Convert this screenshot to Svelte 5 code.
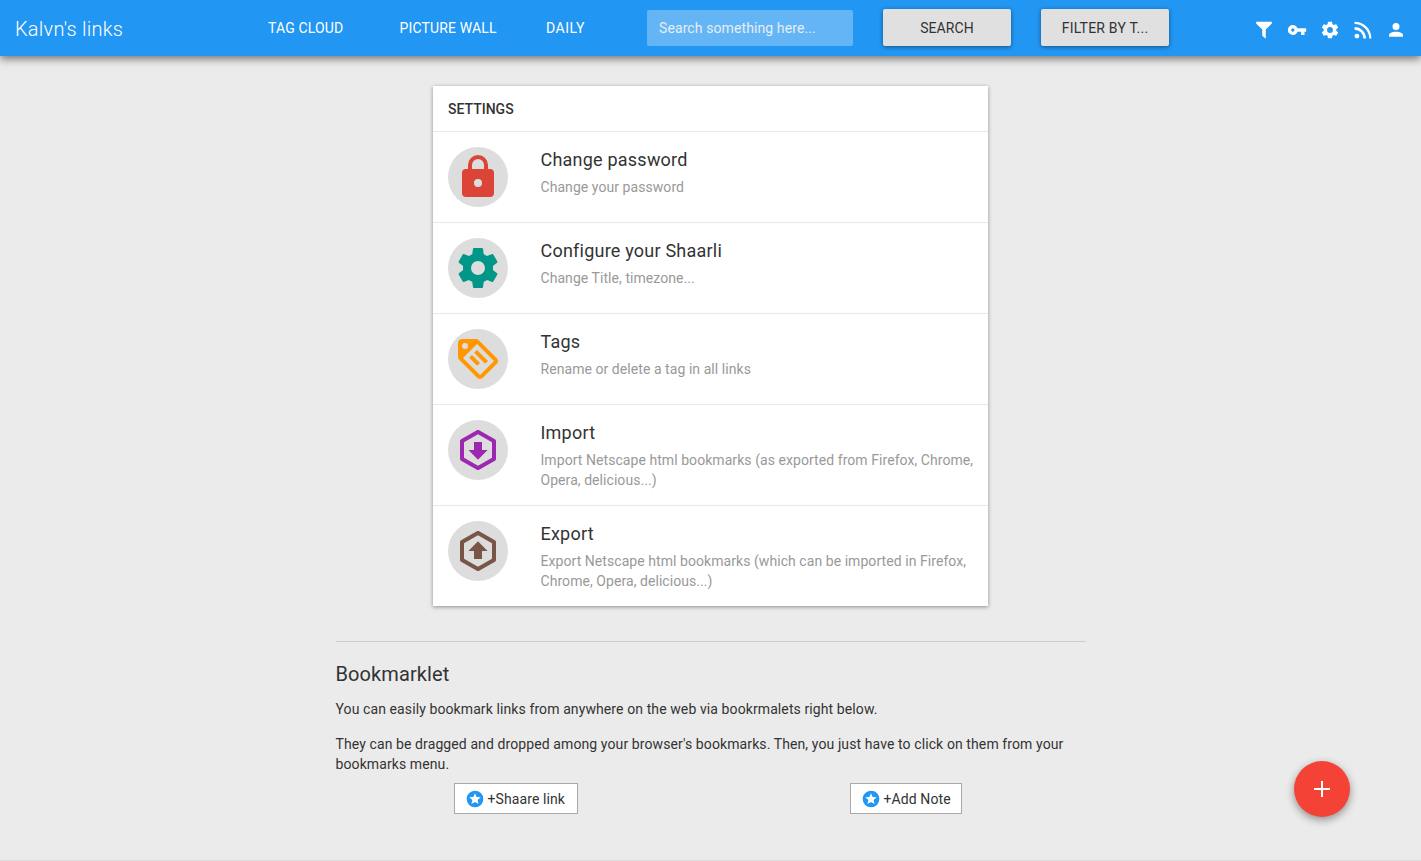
<script>
  const gear =
    'M12,15.5A3.5,3.5 0 0,1 8.5,12A3.5,3.5 0 0,1 12,8.5A3.5,3.5 0 0,1 15.5,12A3.5,3.5 0 0,1 12,15.5M19.43,12.97C19.47,12.65 19.5,12.33 19.5,12C19.5,11.67 19.47,11.34 19.43,11L21.54,9.37C21.73,9.22 21.78,8.95 21.66,8.73L19.66,5.27C19.54,5.05 19.27,4.96 19.05,5.05L16.56,6.05C16.04,5.66 15.5,5.32 14.87,5.07L14.5,2.42C14.46,2.18 14.25,2 14,2H10C9.75,2 9.54,2.18 9.5,2.42L9.13,5.07C8.5,5.32 7.96,5.66 7.44,6.05L4.95,5.05C4.73,4.96 4.46,5.05 4.34,5.27L2.34,8.73C2.21,8.95 2.27,9.22 2.46,9.37L4.57,11C4.53,11.34 4.5,11.67 4.5,12C4.5,12.33 4.53,12.65 4.57,12.97L2.46,14.63C2.27,14.78 2.21,15.05 2.34,15.27L4.34,18.73C4.46,18.95 4.73,19.03 4.95,18.95L7.44,17.94C7.96,18.34 8.5,18.68 9.13,18.93L9.5,21.58C9.54,21.82 9.75,22 10,22H14C14.25,22 14.46,21.82 14.5,21.58L14.87,18.93C15.5,18.67 16.04,18.34 16.56,17.94L19.05,18.95C19.27,19.03 19.54,18.95 19.66,18.73L21.66,15.27C21.78,15.05 21.73,14.78 21.54,14.63L19.43,12.97Z';
  const hexagon =
    'M21,16.5C21,16.88 20.79,17.21 20.47,17.38L12.57,21.82C12.41,21.94 12.21,22 12,22C11.79,22 11.59,21.94 11.43,21.82L3.53,17.38C3.21,17.21 3,16.88 3,16.5V7.5C3,7.12 3.21,6.79 3.53,6.62L11.43,2.18C11.59,2.06 11.79,2 12,2C12.21,2 12.41,2.06 12.57,2.18L20.47,6.62C20.79,6.79 21,7.12 21,7.5V16.5M12,4.15L5,8.09V15.91L12,19.85L19,15.91V8.09L12,4.15Z';

  const settings = [
    {
      title: 'Change password',
      text: 'Change your password',
      color: '#db4437',
      path: 'M12,17A2,2 0 0,0 14,15A2,2 0 0,0 12,13A2,2 0 0,0 10,15A2,2 0 0,0 12,17M18,8A2,2 0 0,1 20,10V20A2,2 0 0,1 18,22H6A2,2 0 0,1 4,20V10A2,2 0 0,1 6,8H7V6A5,5 0 0,1 17,6V8H18M12,3A3,3 0 0,0 9,6V8H15V6A3,3 0 0,0 12,3Z'
    },
    { title: 'Configure your Shaarli', text: 'Change Title, timezone...', color: '#009688', path: gear },
    {
      title: 'Tags',
      text: 'Rename or delete a tag in all links',
      color: '#ff9800',
      path: 'M5.5,7A1.5,1.5 0 0,0 7,5.5A1.5,1.5 0 0,0 5.5,4A1.5,1.5 0 0,0 4,5.5A1.5,1.5 0 0,0 5.5,7M21.41,11.58C21.77,11.94 22,12.44 22,13C22,13.55 21.78,14.05 21.41,14.41L14.41,21.41C14.05,21.77 13.55,22 13,22C12.45,22 11.95,21.77 11.58,21.41L2.59,12.41C2.22,12.05 2,11.55 2,11V4C2,2.89 2.89,2 4,2H11C11.55,2 12.05,2.22 12.41,2.58L21.41,11.58M13,20L20,13L11.5,4.5L4.5,11.5L13,20M10.09,8.91L11.5,7.5L17,13L15.59,14.41L10.09,8.91M7.59,11.41L9,10L13,14L11.59,15.41L7.59,11.41Z'
    },
    {
      title: 'Import',
      text: 'Import Netscape html bookmarks (as exported from Firefox, Chrome, Opera, delicious...)',
      color: '#9c27b0',
      path: hexagon + 'M10,8H14V12H16.8L12,16.9L7.2,12H10Z'
    },
    {
      title: 'Export',
      text: 'Export Netscape html bookmarks (which can be imported in Firefox, Chrome, Opera, delicious...)',
      color: '#795548',
      path: hexagon + 'M10,16H14V12H16.8L12,7.1L7.2,12H10Z'
    }
  ];

  const tools = [
    { label: 'Filter', path: 'M2.6,2.2H21.4V4.2L14.1,11.4V22.6L9.9,18.8V11.4L2.6,4.2Z' },
    { label: 'Login', path: 'M7,14A2,2 0 0,1 5,12A2,2 0 0,1 7,10A2,2 0 0,1 9,12A2,2 0 0,1 7,14M12.65,10C11.83,7.67 9.61,6 7,6A6,6 0 0,0 1,12A6,6 0 0,0 7,18C9.61,18 11.83,16.33 12.65,14H17V18H21V14H23V10H12.65Z' },
    { label: 'Settings', path: gear },
    { label: 'RSS', path: 'M4.7,16.4A2.9,2.9 0 0,1 4.7,22.2A2.9,2.9 0 0,1 4.7,16.4M1.9,2A20.2,20.2 0 0,1 22.1,22.2H19.4A17.5,17.5 0 0,0 1.9,4.7V2M1.9,8.5A13.7,13.7 0 0,1 15.6,22.2H12.5A10.6,10.6 0 0,0 1.9,11.6V8.5Z' },
    { label: 'Account', path: 'M12,3.6A4.2,4.2 0 0,1 16.2,7.8A4.2,4.2 0 0,1 12,12A4.2,4.2 0 0,1 7.8,7.8A4.2,4.2 0 0,1 12,3.6M12,14C16.6,14 20.4,15.8 20.4,18.1V20.2H3.6V18.1C3.6,15.8 7.4,14 12,14Z' }
  ];

  const bookmarklets = [
    { name: '+Shaare link', width: 124 },
    { name: '+Add Note', width: 112 }
  ];
</script>

<div class="page">
  <header>
    <span class="brand">Kalvn's links</span>
    <nav>
      <span class="cloud">TAG CLOUD</span>
      <span class="wall">PICTURE WALL</span>
      <span class="daily">DAILY</span>
    </nav>
    <input type="text" placeholder="Search something here..." />
    <button class="raised">SEARCH</button>
    <button class="raised filter">FILTER BY T...</button>
    <div class="tools">
      {#each tools as t}
        <svg viewBox="0 0 24 24" role="img" aria-label={t.label}><path d={t.path} /></svg>
      {/each}
    </div>
  </header>

  <main>
    <section class="card">
      <h2>SETTINGS</h2>
      {#each settings as s}
        <div class="row">
          <div class="disc">
            <svg viewBox="0 0 24 24"><path d={s.path} fill={s.color} fill-rule="evenodd" /></svg>
          </div>
          <div class="info">
            <h3>{s.title}</h3>
            <p>{s.text}</p>
          </div>
        </div>
      {/each}
    </section>

    <section class="bookmarklet">
      <h2>Bookmarklet</h2>
      <p>You can easily bookmark links from anywhere on the web via bookrmalets right below.</p>
      <p>They can be dragged and dropped among your browser's bookmarks. Then, you just have to click on them from your bookmarks menu.</p>
      <div class="links">
        {#each bookmarklets as b}
          <div class="cell">
            <span class="drag" style:width="{b.width}px">
              <svg viewBox="0 0 24 24"><path d="M16.23,18L12,15.45L7.77,18L8.89,13.19L5.16,9.96L10.08,9.54L12,5L13.92,9.53L18.84,9.95L15.11,13.18L16.23,18M12,2C6.47,2 2,6.5 2,12A10,10 0 0,0 12,22A10,10 0 0,0 22,12A10,10 0 0,0 12,2Z" fill="#2196f3" fill-rule="evenodd" /></svg>
              {b.name}
            </span>
          </div>
        {/each}
      </div>
    </section>
  </main>

  <button class="fab" aria-label="Add">
    <svg viewBox="0 0 16 16"><path d="M7,0H9V7H16V9H9V16H7V9H0V7H7Z" fill="#fff" /></svg>
  </button>
</div>

<style>
  :global(body) {
    background: #ebebeb;
  }
  .page {
    box-sizing: border-box;
    height: 861px;
    border-bottom: 1px solid #dcdcdc;
    font: 14px/20px Roboto, sans-serif;
    letter-spacing: 0.1px;
    color: #333;
  }
  h2, h3, p {
    margin: 0;
    font-weight: 400;
  }
  svg {
    display: block;
    flex: none;
  }
  header {
    display: flex;
    align-items: center;
    box-sizing: border-box;
    height: 56px;
    padding: 0 15px;
    background: #2196f3;
    color: #fff;
    box-shadow: 0 3px 8px rgba(0, 0, 0, 0.5);
  }
  .brand {
    width: 253px;
    font-size: 20px;
    font-weight: 300;
    letter-spacing: 0.24px;
    padding-top: 2px;
  }
  nav {
    display: flex;
    letter-spacing: 0.15px;
    white-space: nowrap;
  }
  .cloud { width: 131.5px; }
  .wall { width: 146.5px; }
  .daily {
    width: 101px;
    letter-spacing: 0.5px;
  }
  input {
    box-sizing: border-box;
    width: 206px;
    height: 36px;
    margin-right: 30px;
    padding: 0 12px;
    border: 0;
    border-radius: 2px;
    background: rgba(255, 255, 255, 0.3);
    font: inherit;
    letter-spacing: 0.1px;
  }
  input::placeholder {
    color: #e6eef5;
    opacity: 1;
  }
  .raised {
    width: 128px;
    height: 37px;
    margin: 0 30px 1px 0;
    padding: 0;
    border: 0;
    border-radius: 2px;
    background: #e0e0e0;
    color: #333;
    font: inherit;
    letter-spacing: 0.1px;
    box-shadow: 0 1px 4px rgba(0, 0, 0, 0.45);
  }
  .filter {
    letter-spacing: 0.22px;
  }
  .tools {
    display: flex;
    gap: 13px;
    margin-left: auto;
    padding-top: 4px;
  }
  .tools svg {
    width: 20px;
    height: 20px;
    fill: #fff;
  }
  main {
    padding-top: 30px;
  }
  .card {
    width: 555px;
    margin: 0 auto;
    background: #fff;
    box-shadow: 0 1px 4px rgba(0, 0, 0, 0.4);
  }
  .card h2 {
    padding: 13px 15px 12px;
    font-size: 14px;
    font-weight: 500;
    line-height: 20px;
    letter-spacing: 0;
  }
  .row {
    display: flex;
    gap: 32.5px;
    padding: 15px 10px 15px 15px;
    border-top: 1px solid #e8e8e8;
  }
  .disc {
    display: flex;
    align-items: center;
    justify-content: center;
    flex: none;
    width: 60px;
    height: 60px;
    border-radius: 50%;
    background: #ddd;
  }
  .disc svg {
    width: 48px;
    height: 48px;
  }
  h3 {
    margin-bottom: 4px;
    font-size: 18px;
    line-height: 26px;
    letter-spacing: 0.22px;
  }
  .info p {
    color: #999;
    letter-spacing: 0.06px;
  }
  .bookmarklet {
    box-sizing: border-box;
    width: 750px;
    margin: 35px auto 0;
    padding-top: 20px;
    border-top: 1px solid #ccc;
  }
  .bookmarklet h2 {
    margin-bottom: 13px;
    font-size: 20px;
    line-height: 24px;
  }
  .bookmarklet p + p {
    margin-top: 15px;
  }
  .links {
    display: grid;
    grid-template-columns: 1fr 1fr;
    margin: 9px -15px 0;
  }
  .cell {
    display: flex;
    justify-content: center;
  }
  .drag {
    display: flex;
    align-items: center;
    box-sizing: border-box;
    height: 31px;
    gap: 3px;
    padding-left: 10px;
    border: 1px solid #aaa;
    background: #fff;
    white-space: nowrap;
  }
  .drag svg {
    width: 20px;
    height: 20px;
  }
  .fab {
    position: fixed;
    right: 71px;
    bottom: 44px;
    display: flex;
    align-items: center;
    justify-content: center;
    width: 56px;
    height: 56px;
    padding: 0;
    border: 0;
    border-radius: 50%;
    background: #f44336;
    box-shadow: 0 3px 8px rgba(0, 0, 0, 0.4);
  }
  .fab svg {
    width: 16px;
    height: 16px;
  }
</style>
